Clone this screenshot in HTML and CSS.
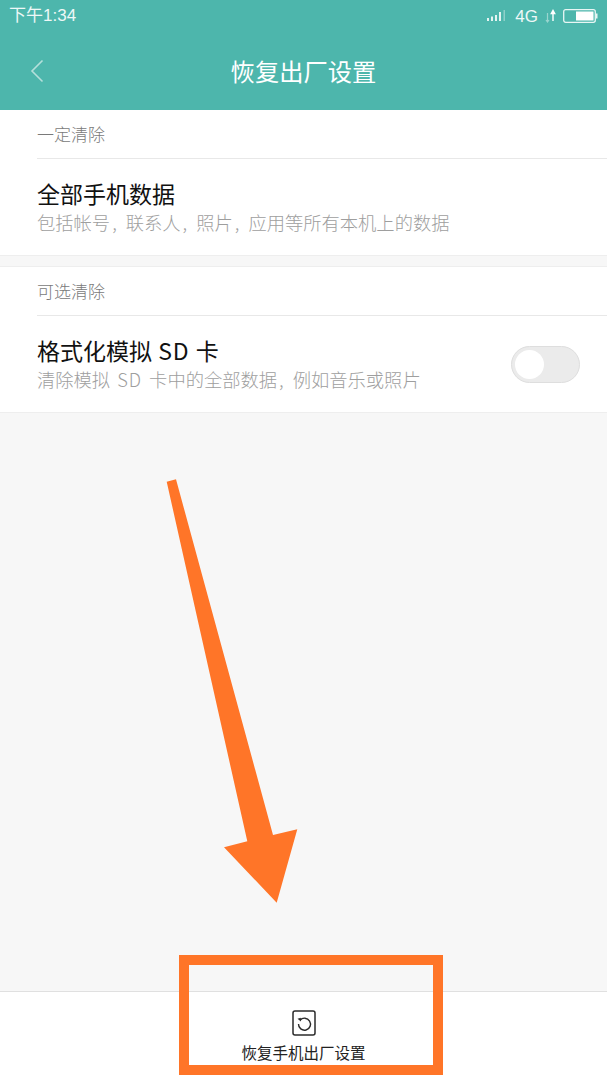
FILE: index.html
```html
<!DOCTYPE html>
<html lang="zh-CN">
<head>
<meta charset="utf-8">
<title>恢复出厂设置</title>
<link rel="stylesheet" href="styles.css">
</head>
<body>
<div class="screen">
  <header class="header">
    <div class="status">
      <span class="time">下午1:34</span>
      <div class="status-right">
        <svg class="signal" width="20" height="14" viewBox="0 0 20 14">
          <rect x="0" y="9" width="2" height="3" fill="#e4f4f2"/>
          <rect x="4" y="7.5" width="2" height="4.5" fill="#e4f4f2"/>
          <rect x="8" y="6" width="2" height="6" fill="#e4f4f2"/>
          <rect x="12" y="3" width="2" height="9" fill="#e4f4f2"/>
          <rect x="16.5" y="1" width="1.5" height="11" fill="#8ed0c9"/>
        </svg>
        <span class="net">4G</span>
        <svg class="updown" width="11" height="14" viewBox="0 0 11 14">
          <path d="M2.5 13V4M1 11l1.5 2 1.500-2" stroke="#9ad5cf" stroke-width="1.200" fill="none"/>
          <path d="M8 12V2M6.300 4.500 8 1.500l1.700 3z" stroke="#fff" stroke-width="1.400" fill="#fff"/>
        </svg>
        <svg class="battery" width="35" height="14" viewBox="0 0 35 14">
          <rect x="0.700" y="0.700" width="31.600" height="12.600" rx="2" fill="none" stroke="#e8f6f4" stroke-width="1.300"/>
          <rect x="13" y="2.500" width="17.500" height="9" fill="#fff"/>
          <rect x="33" y="4.500" width="1.500" height="5" fill="#e8f6f4"/>
        </svg>
      </div>
    </div>
    <div class="nav">
      <svg class="back" width="14" height="24" viewBox="0 0 14 24">
        <path d="M12.500 1.500 2 12l10.500 10.500" fill="none" stroke="#b5e0db" stroke-width="1.600"/>
      </svg>
      <h1 class="title">恢复出厂设置</h1>
    </div>
  </header>

  <main class="content">
    <section class="group">
      <div class="group-label">一定清除</div>
      <div class="row">
        <div class="row-text">
          <div class="row-title">全部手机数据</div>
          <div class="row-sub">包括帐号<span class="sep">,</span> 联系人<span class="sep">,</span> 照片<span class="sep">,</span> 应用等所有本机上的数据</div>
        </div>
      </div>
    </section>
    <section class="group group-second">
      <div class="group-label">可选清除</div>
      <div class="row">
        <div class="row-text">
          <div class="row-title">格式化模拟 <span class="latin">SD</span> 卡</div>
          <div class="row-sub">清除模拟 <span class="latin-sub">SD</span> 卡中的全部数据<span class="sep">,</span> 例如音乐或照片</div>
        </div>
        <div class="switch"><span class="knob"></span></div>
      </div>
    </section>
  </main>

  <footer class="footer">
    <svg class="reset-icon" width="24" height="26" viewBox="0 0 24 26">
      <rect x="1" y="1" width="22" height="24" rx="2" fill="none" stroke="#2b2b2b" stroke-width="1.500"/>
      <path d="M8 10.200A6 6 0 1 1 6.500 14" fill="none" stroke="#2b2b2b" stroke-width="1.400"/>
      <path d="M5.500 8.800 8.800 7.800 9 11.500z" fill="#2b2b2b"/>
    </svg>
    <div class="footer-label">恢复手机出厂设置</div>
  </footer>

  <svg class="arrow" width="607" height="1080" viewBox="0 0 607 1080">
    <polygon points="166.700,481.700 176,479.300 273,835 297.300,829.300 276.700,902.700 224,847.300 247.300,841.300" fill="#ff7528"/>
  </svg>
  <div class="highlight"></div>
</div>
</body>
</html>
```

FILE: styles.css
```css
* { box-sizing: border-box; }
html, body { margin: 0; padding: 0; }
body { font-family: "Noto Sans CJK SC", "Liberation Sans", sans-serif; background: #f7f7f7; }
.screen { position: relative; width: 607px; height: 1080px; display: flex; flex-direction: column; overflow: hidden; }
.header { height: 110px; background: #4db6ac; color: #fff; flex: none; }
.status { height: 32px; display: flex; justify-content: space-between; align-items: center; padding: 0 9px 0 9px; }
.time { font-family: "Liberation Sans", "Noto Sans CJK SC", sans-serif; font-size: 17px; line-height: 20px; margin-top: 0; color: #eef8f7; }
.status-right { display: flex; align-items: center; }
.signal { margin-right: 8px; }
.net { font-family: "Liberation Sans", sans-serif; font-size: 17px; line-height: 20px; margin-top: 1px; color: #eef8f7; margin-right: 7px; }
.updown { margin-right: 7px; }
.nav { height: 78px; display: flex; align-items: center; padding: 0 0 0 30px; position: relative; }
.back { margin-top: -1px; flex: none; }
.title { position: absolute; left: 0; right: 0; top: 20px; margin: 0; font-size: 24.300px; line-height: 38px; font-weight: 400; text-align: center; }
.content { flex: 1; }
.group { background: #fff; border-bottom: 1px solid #eeeeee; }
.group-second { margin-top: 10px; border-top: 1px solid #eeeeee; }
.group-label { margin-left: 37px; height: 49px; padding-top: 11px; font-size: 17px; font-weight: 300; line-height: 26px; color: #7a7a7a; border-bottom: 1px solid #e8e8e8; }
.row { height: 96px; padding: 19px 27px 0 37px; display: flex; justify-content: space-between; }
.row-title { font-size: 23px; line-height: 30px; color: #111; white-space: nowrap; }
.latin { letter-spacing: 1px; margin: 0 1px; }
.row-sub { font-size: 18.300px; font-weight: 300; line-height: 28px; color: #9e9e9e; white-space: nowrap; }
.latin-sub { letter-spacing: 1px; margin: 0 3px; }
.sep { margin: 0 5px 0 2px; }
.switch { width: 69px; height: 37px; margin-top: 11px; border-radius: 19px; background: #ebebeb; border: 1px solid #dedede; padding: 3px; }
.knob { display: block; width: 29px; height: 29px; border-radius: 50%; background: #fff; }
.footer { height: 89px; flex: none; background: #fff; border-top: 1px solid #e0e0e0; display: flex; flex-direction: column; align-items: center; padding-top: 18px; }
.reset-icon { display: block; }
.footer-label { font-size: 15.500px; line-height: 24px; margin-top: 4px; color: #222; white-space: nowrap; }
.arrow { position: absolute; left: 0; top: 0; pointer-events: none; }
.highlight { position: absolute; left: 179px; top: 955px; width: 264px; height: 120px; border: 10px solid #ff7528; }
```
